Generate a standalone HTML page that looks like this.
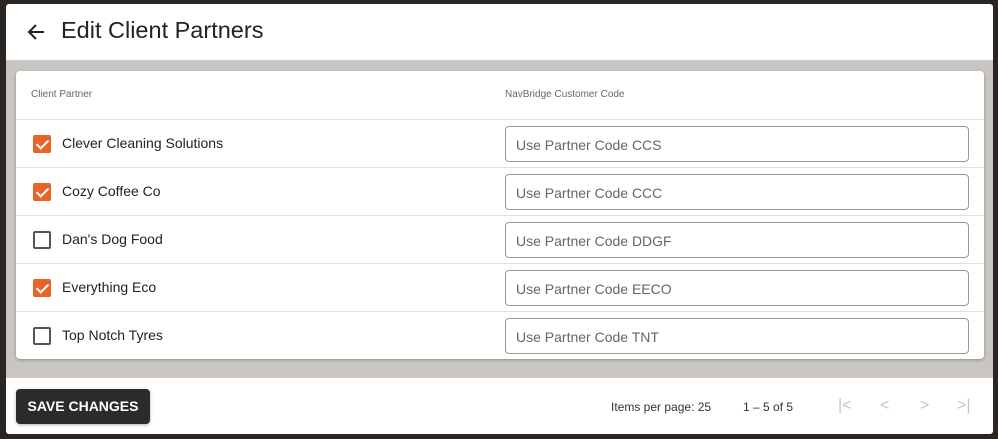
<!DOCTYPE html>
<html><head><style>
*{box-sizing:border-box;margin:0;padding:0}
body{width:998px;height:439px;background:#2b2622;font-family:"Liberation Sans",sans-serif;position:relative;overflow:hidden}
.panel{position:absolute;left:6px;top:4px;width:987px;height:430px;background:#fff;border-radius:3px;overflow:hidden}
.head{height:57px;position:relative;border-bottom:1px solid #ccc;box-shadow:0 1px 2px rgba(0,0,0,.2)}
.head h1{position:absolute;left:55px;top:13px;font-size:23.5px;font-weight:normal;color:#222}
.mid{position:absolute;left:0;top:57px;width:987px;height:317px;background:#c9c6c2}
.card{position:absolute;left:10px;top:10px;width:968px;height:288px;background:#fff;border-radius:4px;box-shadow:0 1px 3px rgba(0,0,0,.3)}
.th{height:49px;border-bottom:1px solid #e0e0e0;position:relative;font-size:10px;color:#666}
.th span{position:absolute;top:18px}
.row{height:48px;border-bottom:1px solid #e0e0e0;position:relative}
.row:last-child{border-bottom:none}
.cb{position:absolute;left:17px;top:15px;width:18px;height:18px;border:2px solid #555;border-radius:2px}
.cb.on{background:#e8622c;border-color:#e8622c}
.cb.on:after{content:"";position:absolute;left:4px;top:0px;width:5px;height:10px;border:solid #fff;border-width:0 2px 2px 0;transform:rotate(45deg)}
.name{position:absolute;left:46px;top:15px;font-size:14px;color:#222}
.inp{position:absolute;left:489px;top:6px;width:464px;height:36px;border:1px solid #999;border-radius:4px;font-size:14px;color:#666;padding:10px 10px}
.foot{position:absolute;left:0;top:374px;width:987px;height:56px}
.btn{position:absolute;left:10px;top:11px;width:134px;height:35px;background:#2b2b2b;color:#fff;border-radius:4px;font-size:14px;font-weight:bold;text-align:center;line-height:35px;box-shadow:0 1px 3px rgba(0,0,0,.3)}
.pg{position:absolute;top:22px;font-size:12px;color:#333}
.nav{position:absolute;top:19px;font-size:16px;color:#c5c5c5}
</style></head><body>
<div class="panel">
 <div class="head">
  <svg style="position:absolute;left:20px;top:19px" width="20" height="18" viewBox="0 0 20 18"><path d="M18 9H3M10 2L3 9l7 7" stroke="#222" stroke-width="2" fill="none"/></svg>
  <h1>Edit Client Partners</h1>
 </div>
 <div class="mid"><div class="card">
  <div class="th"><span style="left:15px">Client Partner</span><span style="left:489px">NavBridge Customer Code</span></div>
  <div class="row"><div class="cb on"></div><div class="name">Clever Cleaning Solutions</div><div class="inp">Use Partner Code CCS</div></div>
  <div class="row"><div class="cb on"></div><div class="name">Cozy Coffee Co</div><div class="inp">Use Partner Code CCC</div></div>
  <div class="row"><div class="cb"></div><div class="name">Dan's Dog Food</div><div class="inp">Use Partner Code DDGF</div></div>
  <div class="row"><div class="cb on"></div><div class="name">Everything Eco</div><div class="inp">Use Partner Code EECO</div></div>
  <div class="row"><div class="cb"></div><div class="name">Top Notch Tyres</div><div class="inp">Use Partner Code TNT</div></div>
 </div></div>
 <div class="foot">
  <div class="btn">SAVE CHANGES</div>
  <div class="pg" style="left:605px">Items per page: 25</div>
  <div class="pg" style="left:737px">1 – 5 of 5</div>
  <div class="nav" style="left:832px">|&lt;</div>
  <div class="nav" style="left:874px">&lt;</div>
  <div class="nav" style="left:914px">&gt;</div>
  <div class="nav" style="left:951px">&gt;|</div>
 </div>
</div>
</body></html>
